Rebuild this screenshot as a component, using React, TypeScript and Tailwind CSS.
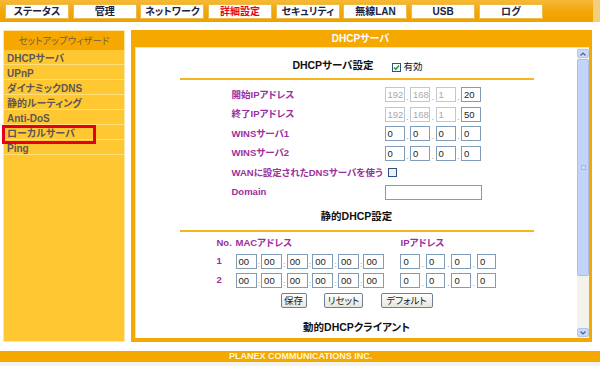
import React from "react";

function F({ v, dis = false, w = "w-[20px]" }: { v: string; dis?: boolean; w?: string }) {
  return (
    <div
      className={`${w} h-[15px] shrink-0 border bg-white pl-[2px] text-[9.5px] leading-[13px] ${
        dis ? "border-[#bcc8d8] text-[#a9a9a9]" : "border-[#7f9db9] text-[#222]"
      }`}
    >
      {v}
    </div>
  );
}

function Dot({ w = "w-[5.5px]", c = "." }: { w?: string; c?: string }) {
  return <div className={`${w} shrink-0 self-end text-center text-[8px] leading-[8px] text-[#777]`}>{c}</div>;
}

function IpFields({ vals, dis = [false, false, false, false] }: { vals: string[]; dis?: boolean[] }) {
  return (
    <div className="flex items-center">
      <F v={vals[0]} dis={dis[0]} />
      <Dot />
      <F v={vals[1]} dis={dis[1]} />
      <Dot />
      <F v={vals[2]} dis={dis[2]} />
      <Dot />
      <F v={vals[3]} dis={dis[3]} />
    </div>
  );
}

function Label({ children }: { children: React.ReactNode }) {
  return <div className="w-[205px] shrink-0 pl-[52px] text-[9.5px] font-bold text-[#9b2f9d]">{children}</div>;
}

function Line() {
  return <div className="h-[2px] w-full bg-[#f6b51e]" />;
}

function Btn({ children, w }: { children: React.ReactNode; w: string }) {
  return (
    <div
      className={`${w} h-[15px] rounded-[2px] border border-[#6f7f96] bg-gradient-to-b from-white to-[#e6e6de] text-center text-[9.5px] leading-[13px] text-[#222]`}
    >
      {children}
    </div>
  );
}

function StaticRow({ n }: { n: string }) {
  const mac = ["00", "00", "00", "00", "00", "00"];
  return (
    <div className="flex h-[19px] items-center">
      <div className="w-[56px] shrink-0 pl-[37px] text-[9.5px] font-bold text-[#9b2f9d]">{n}</div>
      <div className="flex items-center">
        {mac.map((m, i) => (
          <React.Fragment key={i}>
            {i > 0 && <Dot w="w-[4.6px]" c=":" />}
            <F v={m} w="w-[21px]" />
          </React.Fragment>
        ))}
      </div>
      <div className="ml-[16px] flex items-center">
        <F v="0" w="w-[19.5px]" />
        <Dot w="w-[6px]" />
        <F v="0" w="w-[19.5px]" />
        <Dot w="w-[6px]" />
        <F v="0" w="w-[19.5px]" />
        <Dot w="w-[6px]" />
        <F v="0" w="w-[19.5px]" />
      </div>
    </div>
  );
}

function Check({ checked }: { checked: boolean }) {
  return (
    <svg width="9" height="9" viewBox="0 0 9 9" className="shrink-0">
      <rect x="0.5" y="0.5" width="8" height="8" fill={checked ? "#fff" : "#eef0f4"} stroke="#2a5384" />
      {checked && <path d="M2 4.5 L3.7 6.3 L7 2.5" fill="none" stroke="#21a32b" strokeWidth="1.6" />}
    </svg>
  );
}

const tabs = ["ステータス", "管理", "ネットワーク", "詳細設定", "セキュリティ", "無線LAN", "USB", "ログ"];
const side = ["DHCPサーバ", "UPnP", "ダイナミックDNS", "静的ルーティング", "Anti-DoS", "ローカルサーバ", "Ping"];

export default function App() {
  return (
    <div className="relative flex h-[366px] w-[600px] flex-col overflow-hidden bg-white font-['Liberation_Sans','Noto_Sans_CJK_JP',sans-serif] [font-feature-settings:'palt']">
      {/* top bar */}
      <div className="flex h-[22px] shrink-0">
        <div className="flex w-[593px] gap-[3.7px] bg-gradient-to-b from-[#f7b935] via-[#f1a707] to-[#eea200] pl-[5px] pt-[4px]">
          {tabs.map((t) => (
            <div
              key={t}
              className={`h-[15px] w-[64px] border border-[#eebb48] bg-white text-center text-[10px] font-bold leading-[13px] ${
                t === "詳細設定" ? "text-[#e8001c]" : "text-[#1c2340]"
              }`}
            >
              {t}
            </div>
          ))}
        </div>
        <div className="flex-1 bg-[#f2cf7c]" />
      </div>

      {/* body */}
      <div className="mt-[8px] flex h-[312px] shrink-0 gap-[6px] pl-[3px]">
        {/* sidebar */}
        <div className="relative flex w-[122px] flex-col border border-[#fbe6a8] bg-[#ffc833]">
          <div className="h-[19px] bg-[#f6a800] text-center text-[9.5px] leading-[19px] text-[#6c5e44]">
            セットアップウィザード
          </div>
          {side.map((s) => (
            <div key={s} className="h-[15px] border-b border-[#ffdf7a] pl-[3px] pt-[1.5px] text-[10px] font-bold leading-[13px] text-[#5e5656]">
              {s}
            </div>
          ))}
          <div className="absolute left-[-2px] top-[94px] h-[18.5px] w-[94px] border-[3px] border-[#e4001b]" />
        </div>

        {/* main panel */}
        <div className="flex w-[461px] flex-col bg-[#f5a800] pb-[4px] pl-[4px] pr-[3px]">
          <div className="h-[17px] shrink-0 pr-[3px] text-center text-[10px] font-bold leading-[17px] text-white">DHCPサーバ</div>
          <div className="flex min-h-0 flex-1 border-l border-t border-[#fde2a0] bg-white">
            <div className="min-w-0 flex-1 overflow-hidden">
              <div className="mx-auto w-[354px]">
                <div className="flex h-[30px] items-end justify-center pb-[4px] pl-[2px]">
                  <span className="text-[10.5px] font-bold text-[#111]">DHCPサーバ設定</span>
                  <span className="ml-[18px] mb-[2px]">
                    <Check checked />
                  </span>
                  <span className="ml-[3px] text-[9.5px] text-[#111]">有効</span>
                </div>
                <Line />
                <div className="pt-[5px]">
                  <div className="flex h-[19.5px] items-center">
                    <Label>開始IPアドレス</Label>
                    <IpFields vals={["192", "168", "1", "20"]} dis={[true, true, true, false]} />
                  </div>
                  <div className="flex h-[19.5px] items-center">
                    <Label>終了IPアドレス</Label>
                    <IpFields vals={["192", "168", "1", "50"]} dis={[true, true, true, false]} />
                  </div>
                  <div className="flex h-[19.5px] items-center">
                    <Label>WINSサーバ1</Label>
                    <IpFields vals={["0", "0", "0", "0"]} />
                  </div>
                  <div className="flex h-[19.5px] items-center">
                    <Label>WINSサーバ2</Label>
                    <IpFields vals={["0", "0", "0", "0"]} />
                  </div>
                  <div className="flex h-[19.5px] items-center">
                    <Label>WANに設定されたDNSサーバを使う</Label>
                    <span className="ml-[3px]">
                      <Check checked={false} />
                    </span>
                  </div>
                  <div className="flex h-[19.5px] items-center">
                    <Label>Domain</Label>
                    <F v="" w="w-[97px]" />
                  </div>
                </div>
                <div className="flex h-[28px] items-end justify-center pb-[5px]">
                  <span className="text-[10.5px] font-bold text-[#111]">静的DHCP設定</span>
                </div>
                <Line />
                <div className="mt-[2px] flex h-[18px] items-center text-[9.5px] font-bold text-[#9b2f9d]">
                  <div className="w-[56px] shrink-0 pl-[37px]">No.</div>
                  <div className="w-[165px] shrink-0">MACアドレス</div>
                  <div>IPアドレス</div>
                </div>
                <StaticRow n="1" />
                <StaticRow n="2" />
                <div className="flex h-[21px] items-center justify-center gap-[17.5px]">
                  <Btn w="w-[26px]">保存</Btn>
                  <Btn w="w-[39px]">リセット</Btn>
                  <Btn w="w-[52px]">デフォルト</Btn>
                </div>
                <div className="flex h-[28px] items-end justify-center pb-[3px]">
                  <span className="text-[10.5px] font-bold text-[#111]">動的DHCPクライアント</span>
                </div>
                <Line />
              </div>
            </div>
            {/* scrollbar */}
            <div className="flex w-[12px] shrink-0 flex-col bg-[#f3f3ec]">
              <div className="mt-[1px] flex h-[9px] items-center justify-center rounded-[2px] border border-[#b3c6ee] bg-[#c9d9f8]">
                <svg width="6" height="4" viewBox="0 0 6 4">
                  <path d="M0.5 3.5 L3 1 L5.5 3.5" fill="none" stroke="#4d6185" strokeWidth="1.2" />
                </svg>
              </div>
              <div className="mt-[1px] flex h-[217px] items-center justify-center rounded-[2px] border border-[#a9bff0] bg-[#c3d4fb]">
                <div className="h-[5px] w-[5px] border border-[#a4b8e4] bg-[#d3e0fc]" />
              </div>
              <div className="flex-1" />
              <div className="mb-[1px] flex h-[9px] items-center justify-center rounded-[2px] border border-[#b3c6ee] bg-[#c9d9f8]">
                <svg width="6" height="4" viewBox="0 0 6 4">
                  <path d="M0.5 0.5 L3 3 L5.5 0.5" fill="none" stroke="#4d6185" strokeWidth="1.2" />
                </svg>
              </div>
            </div>
          </div>
        </div>
      </div>

      {/* footer */}
      <div className="mt-[9px] h-[11px] shrink-0 bg-[#f5a800] pl-[229px] text-[9px] font-bold leading-[11px] text-[#fff6dc]">
        PLANEX COMMUNICATIONS INC.
      </div>
      <div className="flex-1 bg-[#f3f3ef]" />
    </div>
  );
}
